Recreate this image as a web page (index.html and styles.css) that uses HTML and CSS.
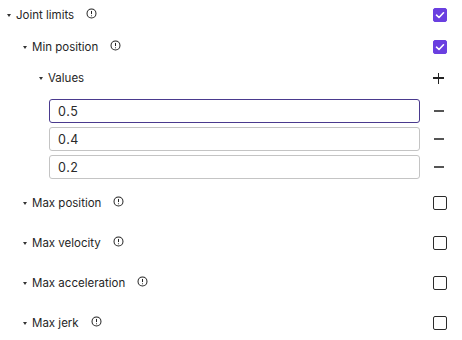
FILE: index.html
```html
<!DOCTYPE html>
<html>
<head>
<meta charset="utf-8">
<link rel="stylesheet" href="styles.css">
</head>
<body>
<div class="panel">
  <div class="row lvl0">
    <span class="caret"></span><span class="label">Joint limits</span>
    <svg class="info" viewBox="0 0 12 12"><circle cx="6" cy="6" r="4.9"/><line x1="6" y1="3.2" x2="6" y2="6.6"/><circle class="dot" cx="6" cy="8.5" r="0.6"/></svg>
    <span class="spacer"></span>
    <span class="ctl"><span class="cb on"><svg viewBox="0 0 14 14"><path d="M3.5 7.2 L6 9.5 L10.5 4.8"/></svg></span></span>
  </div>
  <div class="row lvl1 r-min">
    <span class="caret"></span><span class="label">Min position</span>
    <svg class="info" viewBox="0 0 12 12"><circle cx="6" cy="6" r="4.9"/><line x1="6" y1="3.2" x2="6" y2="6.6"/><circle class="dot" cx="6" cy="8.5" r="0.6"/></svg>
    <span class="spacer"></span>
    <span class="ctl"><span class="cb on"><svg viewBox="0 0 14 14"><path d="M3.5 7.2 L6 9.5 L10.5 4.8"/></svg></span></span>
  </div>
  <div class="row lvl2 r-values">
    <span class="caret"></span><span class="label">Values</span>
    <span class="spacer"></span>
    <span class="ctl"><span class="plus"></span></span>
  </div>
  <div class="inputs">
    <div class="irow"><div class="input focus">0.5</div><span class="ctl"><span class="minus"></span></span></div>
    <div class="irow"><div class="input">0.4</div><span class="ctl"><span class="minus"></span></span></div>
    <div class="irow"><div class="input">0.2</div><span class="ctl"><span class="minus"></span></span></div>
  </div>
  <div class="row lvl1 r-max first">
    <span class="caret"></span><span class="label">Max position</span>
    <svg class="info" viewBox="0 0 12 12"><circle cx="6" cy="6" r="4.9"/><line x1="6" y1="3.2" x2="6" y2="6.6"/><circle class="dot" cx="6" cy="8.5" r="0.6"/></svg>
    <span class="spacer"></span>
    <span class="ctl"><span class="cb"></span></span>
  </div>
  <div class="row lvl1 r-max">
    <span class="caret"></span><span class="label">Max velocity</span>
    <svg class="info" viewBox="0 0 12 12"><circle cx="6" cy="6" r="4.9"/><line x1="6" y1="3.2" x2="6" y2="6.6"/><circle class="dot" cx="6" cy="8.5" r="0.6"/></svg>
    <span class="spacer"></span>
    <span class="ctl"><span class="cb"></span></span>
  </div>
  <div class="row lvl1 r-max">
    <span class="caret"></span><span class="label">Max acceleration</span>
    <svg class="info" viewBox="0 0 12 12"><circle cx="6" cy="6" r="4.9"/><line x1="6" y1="3.2" x2="6" y2="6.6"/><circle class="dot" cx="6" cy="8.5" r="0.6"/></svg>
    <span class="spacer"></span>
    <span class="ctl"><span class="cb"></span></span>
  </div>
  <div class="row lvl1 r-max">
    <span class="caret"></span><span class="label">Max jerk</span>
    <svg class="info" viewBox="0 0 12 12"><circle cx="6" cy="6" r="4.9"/><line x1="6" y1="3.2" x2="6" y2="6.6"/><circle class="dot" cx="6" cy="8.5" r="0.6"/></svg>
    <span class="spacer"></span>
    <span class="ctl"><span class="cb"></span></span>
  </div>
</div>
</body>
</html>
```
FILE: styles.css
```css
html, body { margin: 0; padding: 0; background: #fff; }
body { font-family: Inter, "Noto Sans", sans-serif; font-size: 11.5px; color: #262626; }
.panel { width: 462px; padding-right: 7px; box-sizing: border-box; }
.row { display: flex; align-items: center; height: 30px; }
.lvl0 { padding-left: 7px; }
.lvl1 { padding-left: 23px; }
.lvl2 { padding-left: 39px; }
.r-min { margin-top: 2px; }
.r-values { margin-top: 1px; }
.r-max { margin-top: 10px; }
.r-max.first { margin-top: 9px; }
.caret { width: 0; height: 0; border-left: 2.5px solid transparent; border-right: 2.5px solid transparent; border-top: 3px solid #333; margin-right: 5px; margin-top: 1px; }
.label { white-space: nowrap; }
.info { width: 11px; height: 11px; margin-left: 12px; margin-top: -3px; fill: none; stroke: #222; stroke-width: 1.1; }
.info .dot { fill: #222; stroke: none; }
.spacer { flex: 1; }
.ctl { width: 30px; display: flex; justify-content: center; align-items: center; }
.cb { width: 14px; height: 14px; box-sizing: border-box; border: 1.5px solid #2b2b2b; border-radius: 2px; display: block; }
.cb.on { background: #6a3fe0; border-color: #6a3fe0; }
.cb svg { display: block; width: 14px; height: 14px; margin: -1.5px; fill: none; stroke: #fff; stroke-width: 1.6; stroke-linecap: round; stroke-linejoin: round; }
.plus { position: relative; width: 11px; height: 11px; margin-left: -3px; }
.plus::before, .plus::after { content: ""; position: absolute; background: #222; }
.plus::before { left: 0; right: 0; top: 4.75px; height: 1.5px; }
.plus::after { top: 0; bottom: 0; left: 4.75px; width: 1.5px; }
.minus { width: 10px; height: 2px; background: #555; margin-left: -2px; }
.inputs { display: flex; flex-direction: column; gap: 4px; padding-left: 49px; margin-top: 6px; }
.irow { display: flex; align-items: center; }
.irow .ctl { margin-left: 5px; }
.input { flex: 1; height: 24px; box-sizing: border-box; border: 1px solid #c4c4c4; border-radius: 3px; padding-left: 8px; display: flex; align-items: center; font-size: 12.5px; letter-spacing: 0.6px; color: #2a2a2a; }
.input.focus { border-color: #4a3a8e; }
```
